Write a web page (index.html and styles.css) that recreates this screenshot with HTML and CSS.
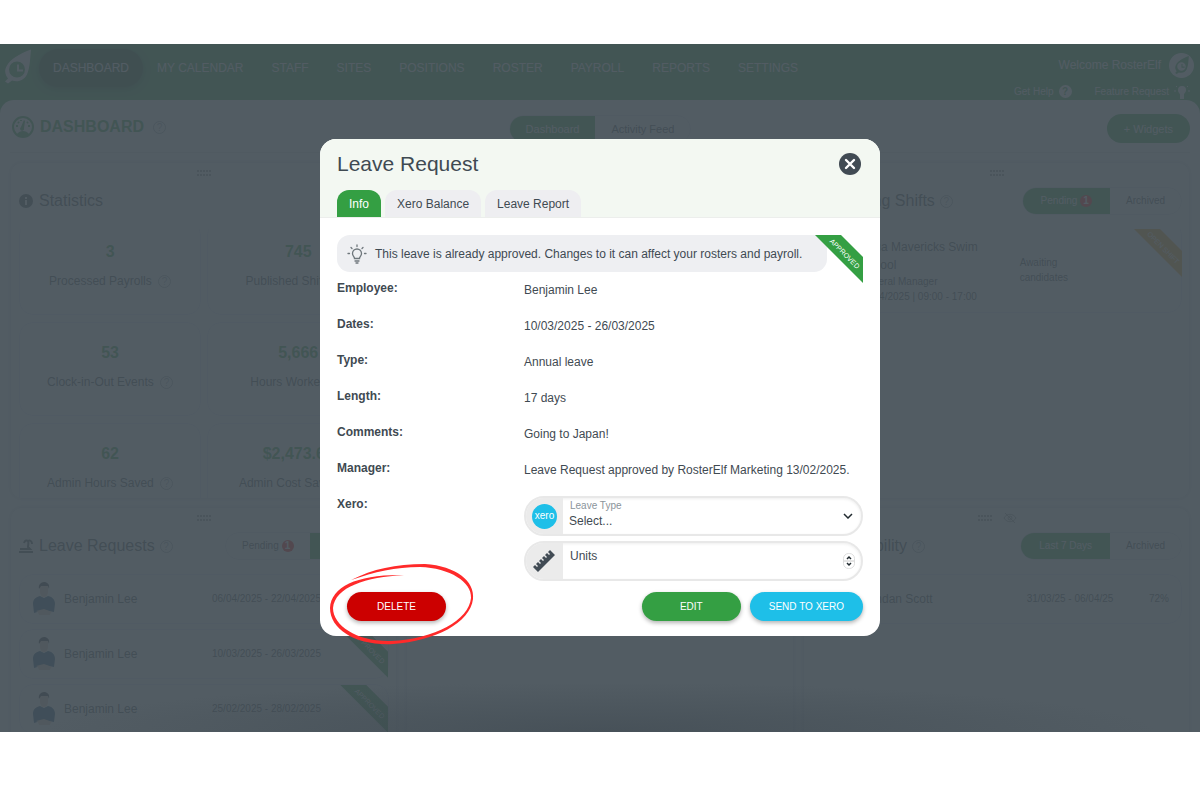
FILE: index.html
```html
<!DOCTYPE html>
<html lang="en">
<head>
<meta charset="UTF-8">
<meta name="viewport" content="width=device-width, initial-scale=1.0">
<title>RosterElf Dashboard</title>
<link rel="stylesheet" href="styles.css">
</head>
<body>

<!-- Shared icons -->
<svg class="sprite" aria-hidden="true">
  <symbol id="elf" viewBox="0 0 26 34">
    <path fill="currentColor" fill-rule="evenodd" d="M26 0C15 4 5 10 2 16c-3 5-2 9 1 13l-3 3 3 2 4-3c6 2 12 0 15-6 3-7 3-15 4-25zM12 12a8 8 0 1 1 0 16 8 8 0 0 1 0-16z"/>
    <path fill="none" stroke="currentColor" stroke-width="2" d="M13 15v6h5"/>
  </symbol>
  <symbol id="grip" viewBox="0 0 16 6">
    <path stroke="currentColor" stroke-width="2" stroke-dasharray="2 1" d="M1 1h15M1 5h15"/>
  </symbol>
  <symbol id="person" viewBox="0 0 24 34">
    <path fill="#e7c9b8" d="M8 4h8v6c0 3-2 5-4 5s-4-2-4-5zM5 28h15l-2 5H7z"/>
    <path fill="#2b2b33" d="M7 7c-1-4 2-7 5-7s6 2 5 7l-1-3H9z"/>
    <path fill="#1d4f7c" d="M8 14l4 2 4-2c5 1 7 4 7 8l-1 8-10-2-10 3-1-9c0-5 3-7 7-8z"/>
    <path fill="#e7c9b8" d="M4 29l8-2 8 3-8 3z"/>
  </symbol>
  <symbol id="bulb" viewBox="0 0 20 20">
    <g fill="none" stroke="currentColor" stroke-width="1.3" stroke-linecap="round">
      <path d="M7.500 14.500c0-2-2-2.500-2-5a4.500 4.500 0 0 1 9 0c0 2.500-2 3-2 5zM8 17h4M9 19h2"/>
      <path d="M10 1v1.500M4 3.500l1 1M16 3.500l-1 1M1 9.500h1.500M17.500 9.500H19"/>
    </g>
  </symbol>
</svg>

<div class="app">

  <header class="top-bar">
    <svg class="logo"><use href="#elf"/></svg>
    <nav class="nav">
      <a class="active" href="#">DASHBOARD</a>
      <a href="#">MY CALENDAR</a>
      <a href="#">STAFF</a>
      <a href="#">SITES</a>
      <a href="#">POSITIONS</a>
      <a href="#">ROSTER</a>
      <a href="#">PAYROLL</a>
      <a href="#">REPORTS</a>
      <a href="#">SETTINGS</a>
    </nav>
    <div class="account">
      <div class="welcome">Welcome RosterElf <span class="avatar-logo"><svg><use href="#elf"/></svg></span></div>
      <div class="links">
        <a href="#">Get Help <span class="help-solid">?</span></a>
        <a href="#">Feature Request
          <svg width="16" height="14" viewBox="0 0 16 14"><path fill="currentColor" d="M6 10c0-2-2-2-2-5a4 4 0 0 1 8 0c0 3-2 3-2 5v4H6z"/><path stroke="currentColor" d="M0 6h2M14 6h2M2 1l1 1M14 1l-1 1"/></svg>
        </a>
      </div>
    </div>
  </header>

  <main class="content">
    <div class="toolbar">
      <h1 class="page-title">
        <svg width="22" height="22" viewBox="0 0 22 22"><circle cx="11" cy="11" r="10" fill="none" stroke="currentColor" stroke-width="2"/><path fill="currentColor" d="M5 18c3-4 9-4 12 0-3 4-9 4-12 0zM9 11l3-7 1 1-1 7a2 2 0 1 1-3-1z"/><path stroke="currentColor" stroke-width="2" d="M4 10h2M6 6l1 1M9 4v1M16 10h2M15 7l1-1"/></svg>
        DASHBOARD <span class="help">?</span>
      </h1>
      <div class="segment large">
        <button class="on">Dashboard</button><button>Activity Feed</button>
      </div>
      <button class="widgets">+ Widgets</button>
    </div>

    <div class="cards">
      <!-- Statistics -->
      <section class="card">
        <div class="grip"><svg><use href="#grip"/></svg></div>
        <div class="card-head">
          <h2><svg width="14" height="14" viewBox="0 0 14 14"><circle cx="7" cy="7" r="7" fill="currentColor"/><path stroke="#fff" stroke-width="2" d="M7 6v5M7 3v2"/></svg>Statistics</h2>
        </div>
        <div class="card-body">
          <div class="stats scrolled">
            <div class="stat"><strong>3</strong><p>Processed Payrolls <span class="help">?</span></p></div>
            <div class="stat"><strong>745</strong><p>Published Shifts <span class="help">?</span></p></div>
            <div class="stat"><strong>53</strong><p>Clock-in-Out Events <span class="help">?</span></p></div>
            <div class="stat"><strong>5,666</strong><p>Hours Worked <span class="help">?</span></p></div>
            <div class="stat"><strong>62</strong><p>Admin Hours Saved <span class="help">?</span></p></div>
            <div class="stat"><strong>$2,473.60</strong><p>Admin Cost Saved <span class="help">?</span></p></div>
          </div>
        </div>
      </section>

      <section class="card"></section>

      <!-- Pending shifts -->
      <section class="card">
        <div class="grip"><svg><use href="#grip"/></svg></div>
        <div class="card-head">
          <h2><svg width="14" height="14" viewBox="0 0 14 14"><circle cx="7" cy="7" r="7" fill="currentColor"/></svg>Pending Shifts <span class="help">?</span></h2>
          <div class="segment">
            <button class="on">Pending <span class="count">1</span></button><button>Archived</button>
          </div>
        </div>
        <div class="card-body">
          <div class="shift scrolled">
            <div class="shift-info">
              <p class="place">Aqua Mavericks Swim School</p>
              <p>General Manager</p>
              <p>04/04/2025 | 09:00 - 17:00</p>
            </div>
            <p class="shift-state">Awaiting candidates</p>
          </div>
          <div class="ribbon orange"><span>OPEN SHIFT</span></div>
        </div>
      </section>

      <!-- Leave requests -->
      <section class="card">
        <div class="grip"><svg><use href="#grip"/></svg></div>
        <div class="card-head">
          <h2><svg width="14" height="14" viewBox="0 0 14 14"><path fill="none" stroke="currentColor" stroke-width="2" d="M0 13h14M1 10h10l-2-2c0-2 1-4 0-6M5 4c1-3 3-3 4-2 2-1 4 0 4 3"/></svg>Leave Requests <span class="help">?</span></h2>
          <div class="segment">
            <button>Pending <span class="count">1</span></button><button class="on">Approved</button>
          </div>
        </div>
        <div class="card-body">
          <div class="person"><svg class="photo"><use href="#person"/></svg><span class="name">Benjamin Lee</span><span class="when">06/04/2025 - 22/04/2025</span></div>
          <div class="person"><svg class="photo"><use href="#person"/></svg><span class="name">Benjamin Lee</span><span class="when">10/03/2025 - 26/03/2025</span><div class="ribbon"><span>APPROVED</span></div></div>
          <div class="person"><svg class="photo"><use href="#person"/></svg><span class="name">Benjamin Lee</span><span class="when">25/02/2025 - 28/02/2025</span><div class="ribbon"><span>APPROVED</span></div></div>
        </div>
      </section>

      <section class="card"></section>

      <!-- Availability -->
      <section class="card">
        <div class="grip">
          <svg><use href="#grip"/></svg>
          <svg class="eye" viewBox="0 0 14 12"><path fill="none" stroke="currentColor" d="M1 6c3-5 9-5 12 0-3 5-9 5-12 0zM2 1l10 10"/><circle cx="7" cy="6" r="2" fill="none" stroke="currentColor"/></svg>
        </div>
        <div class="card-head">
          <h2><svg width="14" height="14" viewBox="0 0 14 14"><circle cx="7" cy="7" r="7" fill="currentColor"/></svg>Availability <span class="help">?</span></h2>
          <div class="segment">
            <button class="on">Last 7 Days</button><button>Archived</button>
          </div>
        </div>
        <div class="card-body">
          <div class="person"><svg class="photo"><use href="#person"/></svg><span class="name">Brendan Scott</span><span class="when short">31/03/25 - 06/04/25</span><span class="rate">72%</span></div>
        </div>
      </section>
    </div>
  </main>

  <!-- Leave request modal -->
  <div class="backdrop">
    <div class="modal" role="dialog" aria-labelledby="modalTitle">
      <div class="modal-head">
        <div class="modal-title">
          <h2 id="modalTitle">Leave Request</h2>
          <button class="close" aria-label="Close"><svg width="22" height="22" viewBox="0 0 22 22"><circle cx="11" cy="11" r="11" fill="#414b54"/><path stroke="#fff" stroke-width="2.400" stroke-linecap="round" d="M7 7l8 8M15 7l-8 8"/></svg></button>
        </div>
        <div class="tabs">
          <button class="active">Info</button>
          <button>Xero Balance</button>
          <button>Leave Report</button>
        </div>
      </div>

      <div class="modal-body">
        <div class="notice"><svg><use href="#bulb"/></svg>This leave is already approved. Changes to it can affect your rosters and payroll.</div>
        <div class="ribbon"><span>APPROVED</span></div>

        <dl class="details">
          <dt>Employee:</dt><dd>Benjamin Lee</dd>
          <dt>Dates:</dt><dd>10/03/2025 - 26/03/2025</dd>
          <dt>Type:</dt><dd>Annual leave</dd>
          <dt>Length:</dt><dd>17 days</dd>
          <dt>Comments:</dt><dd>Going to Japan!</dd>
          <dt>Manager:</dt><dd>Leave Request approved by RosterElf Marketing 13/02/2025.</dd>
          <dt>Xero:</dt>
          <dd class="fields">
            <div class="field">
              <span class="field-icon"><span class="xero">xero</span></span>
              <div class="field-main">
                <label class="small" for="leaveType">Leave Type</label>
                <select id="leaveType"><option>Select...</option></select>
              </div>
              <svg class="chevron" width="10" height="6" viewBox="0 0 10 6"><path fill="none" stroke="#222b30" stroke-width="1.500" d="M1 1l4 4 4-4"/></svg>
            </div>
            <div class="field">
              <span class="field-icon">
                <svg width="24" height="24" viewBox="0 0 24 24"><path fill="#414b54" d="M0 18l2-2 2 2 1-1-2-2 2-2 2 2 1-1-2-2 2-2 2 2 1-1-2-2 2-2 2 2 1-1-2-2 2-2 2 2 1-1-2-2 2-2 5 5L5 23z"/></svg>
              </span>
              <div class="field-main">
                <label for="units">Units</label>
                <input type="number" id="units">
              </div>
              <svg class="spinner" width="12" height="16" viewBox="0 0 12 16"><rect x=".5" y=".5" width="11" height="15" rx="5" fill="#fff" stroke="#ddd"/><path stroke="#ccc" d="M1 8h10"/><path fill="none" stroke="#222b30" stroke-width="1.500" d="M4 6l2-2 2 2M4 10l2 2 2-2"/></svg>
            </div>
          </dd>
        </dl>

        <div class="actions">
          <div class="delete-wrap">
            <button class="btn red">DELETE</button>
            <svg class="scribble" viewBox="328 562 148 86"><path fill="#ff2a2a" d="M351 580C373 569 395 564 425 564c31 2 50 17 48 35-3 24-38 42-80 45-36 2-63-14-63-36 1-22 29-34 74-33-38 2-69 12-71 33 0 18 25 34 58 33 44-2 78-21 80-43 1-16-21-30-51-31-25 0-45 5-69 13z"/></svg>
          </div>
          <button class="btn">EDIT</button>
          <button class="btn blue">SEND TO XERO</button>
        </div>
      </div>
    </div>
  </div>

</div>

</body>
</html>
```
FILE: styles.css
```css
* {
box-sizing: border-box;
}

body {
margin: 0;
height: 100vh;
padding: 44px 0 68px;
display: flex;
flex-direction: column;
background: #fff;
color: #3f4a52;
font-family: "Liberation Sans", Arial, sans-serif;
font-size: 12px;
line-height: 16px;
}

h1, h2, p, dl, dd {
margin: 0;
}

a {
color: inherit;
text-decoration: none;
}

button, select, input {
font: inherit;
color: inherit;
border: none;
background: none;
padding: 0;
}

button {
cursor: pointer;
}

.sprite {
position: absolute;
width: 0;
height: 0;
}

.app {
position: relative;
flex: 1;
min-height: 0;
overflow: hidden;
background: #349f43;
}

/* Top bar */
.top-bar {
display: flex;
height: 56px;
padding: 5px 6px 0 5px;
color: #fff;
}

.logo {
width: 26px;
height: 35px;
margin-right: 8px;
}

.nav {
display: flex;
align-items: center;
height: 38px;
}

.nav a {
padding: 0 14px;
line-height: 38px;
}

.nav .active {
border-radius: 19px;
background: #1f5a24;
box-shadow: 0 2px 6px #1f5a24;
}

.account {
margin-left: auto;
font-size: 10px;
}

.welcome {
display: flex;
justify-content: flex-end;
align-items: center;
gap: 8px;
height: 32px;
font-size: 12px;
}

.avatar-logo {
display: flex;
align-items: center;
justify-content: center;
width: 25px;
height: 25px;
border-radius: 50%;
background: #fff;
color: #349f43;
}

.avatar-logo svg {
width: 14px;
height: 18px;
}

.links, .links a {
display: flex;
align-items: center;
justify-content: flex-end;
}

.links {
gap: 23px;
height: 21px;
padding-right: 4px;
}

.links a {
gap: 5px;
}

.help-solid {
width: 13px;
height: 13px;
border-radius: 50%;
background: #fff;
color: #349f43;
font-weight: bold;
line-height: 13px;
text-align: center;
}

/* Page */
.content {
padding: 14px 10px 0;
border-radius: 14px 14px 0 0;
background: #fafafc;
}

.toolbar {
display: grid;
grid-template-columns: 1fr auto 1fr;
align-items: center;
padding-bottom: 9px;
margin-bottom: 9px;
border-bottom: 1px solid #ddd;
}

.page-title {
display: flex;
align-items: center;
gap: 6px;
padding: 0 0 3px 2px;
color: #349f43;
font-size: 16px;
}

.help {
display: inline-block;
width: 13px;
height: 13px;
margin-left: 3px;
border: 1px solid #a0a7b0;
border-radius: 50%;
color: #a0a7b0;
font-size: 10px;
font-weight: normal;
line-height: 11px;
text-align: center;
}

.segment {
display: flex;
height: 28px;
border: 1px solid #e4e4ee;
border-radius: 14px;
overflow: hidden;
font-size: 10px;
}

.segment button {
padding: 0 16px;
}

.segment .on {
padding: 0 18px;
background: #349f43;
color: #fff;
}

.large {
font-size: 11px;
}

.large .on {
padding: 0 16px;
}

.count {
display: inline-block;
width: 12px;
height: 12px;
border-radius: 50%;
background: #ff0000;
color: #fff;
font-weight: bold;
line-height: 12px;
text-align: center;
}

.widgets {
justify-self: end;
height: 29px;
padding: 0 17px;
border-radius: 15px;
background: #349f43;
color: #fff;
font-size: 11px;
}

.cards {
display: grid;
grid-template-columns: repeat(3, 1fr);
gap: 8px 9px;
}

.card {
padding: 0 7px 0 8px;
border: 1px solid #e4e4ea;
border-radius: 12px;
background: #fff;
box-shadow: 0 0 4px #ddd;
}

.grip {
display: flex;
justify-content: center;
align-items: center;
gap: 10px;
height: 19px;
margin-bottom: 5px;
color: #999;
}

.grip svg {
width: 16px;
height: 6px;
}

.grip .eye {
width: 14px;
height: 12px;
}

.card-head {
display: flex;
justify-content: space-between;
align-items: center;
height: 28px;
margin-bottom: 14px;
}

.card-head h2 {
display: flex;
align-items: center;
gap: 2px;
font-size: 16px;
font-weight: normal;
}

.card-head h2 svg {
margin-right: 4px;
}

.card-body {
position: relative;
height: 269px;
overflow: hidden;
}

.scrolled {
margin-top: -8px;
}

.stats {
display: grid;
grid-template-columns: 1fr 1fr;
gap: 7px 6px;
}

.stat {
height: 94px;
padding-top: 22px;
border: 1px solid #e4e4f4;
border-radius: 14px;
text-align: center;
}

.stat strong {
color: #349f43;
font-size: 16px;
}

.stat p {
margin-top: 12px;
}

.shift {
display: flex;
height: 92px;
padding: 16px 47px 0;
border: 1px solid #e4e4f4;
border-radius: 14px;
font-size: 10px;
line-height: 15px;
}

.shift-info {
width: 150px;
}

.place {
font-size: 12px;
line-height: 18px;
}

.shift-state {
width: 60px;
margin: 17px 0 0 10px;
}

.person {
position: relative;
display: flex;
align-items: center;
height: 50px;
margin-bottom: 5px;
padding: 0 12px;
border: 1px solid #e4e4f4;
border-radius: 14px;
}

.photo {
width: 24px;
height: 34px;
margin-right: 8px;
}

.name {
width: 148px;
}

.when, .rate {
font-size: 10px;
}

.short {
margin-left: 22px;
}

.rate {
margin-left: auto;
}

/* Corner ribbon */
.ribbon {
position: absolute;
top: 0;
right: 0;
width: 48px;
height: 48px;
display: flex;
align-items: center;
justify-content: center;
background: #349f43;
clip-path: polygon(0 0, 26px 0, 100% 22px, 100% 100%);
color: #fff;
font-size: 7px;
line-height: 8px;
white-space: nowrap;
}

.ribbon span {
padding-bottom: 14px;
transform: rotate(45deg);
}

.orange {
background: #f0a020;
}

/* Modal */
.backdrop {
position: absolute;
top: 0;
right: 0;
bottom: 0;
left: 0;
display: flex;
align-items: center;
justify-content: center;
padding-bottom: 1px;
background: radial-gradient(ellipse 560px 50px at 50% 100%, rgba(60, 70, 78, 0.5), rgba(60, 70, 78, 0)), rgba(67, 78, 86, 0.92);
}

.modal {
width: 560px;
border-radius: 16px;
background: #fff;
}

.modal-head {
padding: 14px 19px 0 17px;
border-bottom: 1px solid #eceeec;
border-radius: 16px 16px 0 0;
background: #f3f8f2;
}

.modal-title {
display: flex;
justify-content: space-between;
align-items: center;
height: 22px;
margin-bottom: 15px;
}

.modal-title h2 {
font-size: 21px;
font-weight: normal;
line-height: 22px;
}

.close svg {
display: block;
}

.tabs {
display: flex;
gap: 4px;
}

.tabs button {
height: 27px;
padding: 0 12px;
border-radius: 12px 12px 0 0;
background: #eeeef1;
}

.tabs .active {
background: #349f43;
color: #fff;
}

.modal-body {
position: relative;
padding: 17px 17px 15px;
}

.modal-body > .ribbon {
top: 17px;
right: 17px;
}

.notice {
display: flex;
align-items: center;
gap: 8px;
height: 37px;
margin: 0 36px 8px 0;
padding-left: 10px;
border-radius: 13px;
background: #eeeff2;
}

.notice svg {
width: 20px;
height: 20px;
color: #6f777c;
}

.details {
display: grid;
grid-template-columns: 187px 1fr;
grid-auto-rows: minmax(36px, auto);
}

.details dt {
font-weight: bold;
}

.details dd {
padding-top: 2px;
}

.details .fields {
display: flex;
flex-direction: column;
gap: 5px;
padding: 0;
}

.field {
position: relative;
display: flex;
height: 40px;
border: 2px solid #e8e8e8;
border-radius: 20px;
overflow: hidden;
box-shadow: inset 0 1px 3px #eee;
}

.field-icon {
display: flex;
align-items: center;
justify-content: center;
width: 37px;
background: #ebebeb;
}

.xero {
width: 25px;
height: 25px;
border-radius: 50%;
background: #1ebfe8;
color: #fff;
font-size: 10px;
line-height: 23px;
text-align: center;
}

.field-main {
display: flex;
flex: 1;
flex-direction: column;
padding: 2px 0 0 7px;
}

.field-main label {
padding-top: 3px;
line-height: 16px;
}

.field-main .small {
padding: 0;
color: #8b949a;
font-size: 10px;
line-height: 12px;
}

.field-main select {
height: 18px;
margin-left: -1px;
appearance: none;
}

.field-main input {
height: 14px;
width: 240px;
appearance: textfield;
}

.chevron, .spinner {
position: absolute;
top: 15px;
right: 8px;
}

.spinner {
top: 10px;
right: 6px;
}

.actions {
display: flex;
gap: 9px;
margin-top: 11px;
}

.delete-wrap {
position: relative;
margin: 0 auto 0 10px;
}

.btn {
display: block;
min-width: 99px;
height: 29px;
padding: 0 19px;
border-radius: 15px;
background: #349f43;
box-shadow: 0 2px 4px rgba(0, 0, 0, 0.3);
color: #fff;
font-size: 10px;
}

.red {
background: #cc0000;
}

.blue {
background: #1ebfe8;
}

.scribble {
position: absolute;
top: -30px;
left: -19px;
width: 148px;
height: 86px;
pointer-events: none;
}
```
